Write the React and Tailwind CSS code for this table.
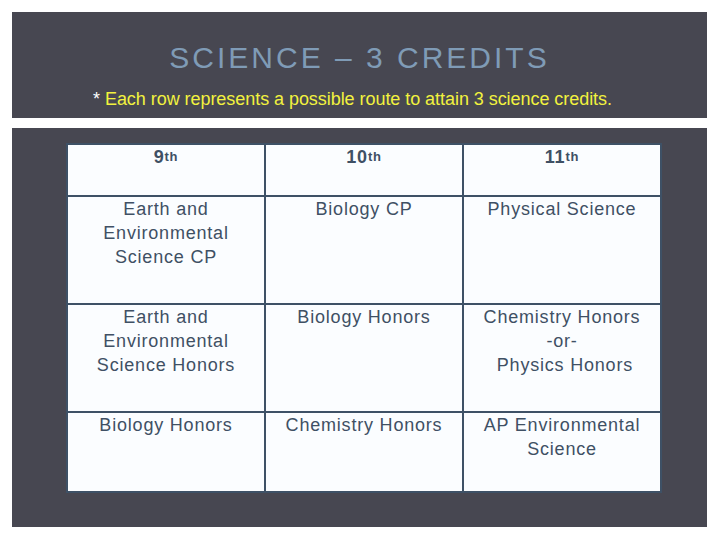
import React from "react";

const rows = [
  [["Earth and", "Environmental", "Science CP"], ["Biology CP"], ["Physical Science"]],
  [["Earth and", "Environmental", "Science Honors"], ["Biology Honors"], ["Chemistry Honors", "-or-", "\u00a0Physics Honors"]],
  [["Biology Honors"], ["Chemistry Honors"], ["AP Environmental", "Science"]],
];

function Cell({ lines, h }) {
  return (
    <td className={`border-2 border-[#3e5166] bg-[#fbfdff] align-top text-center ${h}`}>
      {lines.map((l, i) => (
        <div key={i}>{l}</div>
      ))}
    </td>
  );
}

export default function App() {
  const heights = ["h-[108px]", "h-[108px]", "h-[80px]"];
  return (
    <div className="w-[720px] h-[540px] bg-white pt-[12px] pl-[12px] font-['Liberation_Sans',Arial,sans-serif]">
      <div className="w-[695px] h-[106px] bg-[#474751] flex flex-col items-center">
        <div className="mt-[26px] text-[30px] leading-[40px] tracking-[3px] text-[#7f9bb6] h-[40px] flex items-center">SCIENCE – 3 CREDITS</div>
        <div className="mt-[9px] mr-[14px] text-[18px] leading-[24px] tracking-[-0.05px] text-[#f2f23e]">
          <span className="text-white">*</span> Each row represents a possible route to attain 3 science credits.
        </div>
      </div>
      <div className="w-[695px] h-[399px] bg-[#474751] mt-[10px] pt-[15px] pl-[54px]">
        <table className="border-collapse w-[596px] table-fixed text-[18px] leading-[24px] tracking-[0.8px] text-[#3f5064]">
          <tbody>
            <tr>
              {["9", "10", "11"].map((n) => (
                <td key={n} className="border-2 border-[#3e5166] bg-[#fbfdff] align-top text-center h-[52px]">
                  <span className="font-bold">{n}</span>
                  <sup className="text-[13px] font-bold relative -top-[2px]">th</sup>
                </td>
              ))}
            </tr>
            {rows.map((r, i) => (
              <tr key={i}>
                {r.map((c, j) => (
                  <Cell key={j} lines={c} h={heights[i]} />
                ))}
              </tr>
            ))}
          </tbody>
        </table>
      </div>
    </div>
  );
}
